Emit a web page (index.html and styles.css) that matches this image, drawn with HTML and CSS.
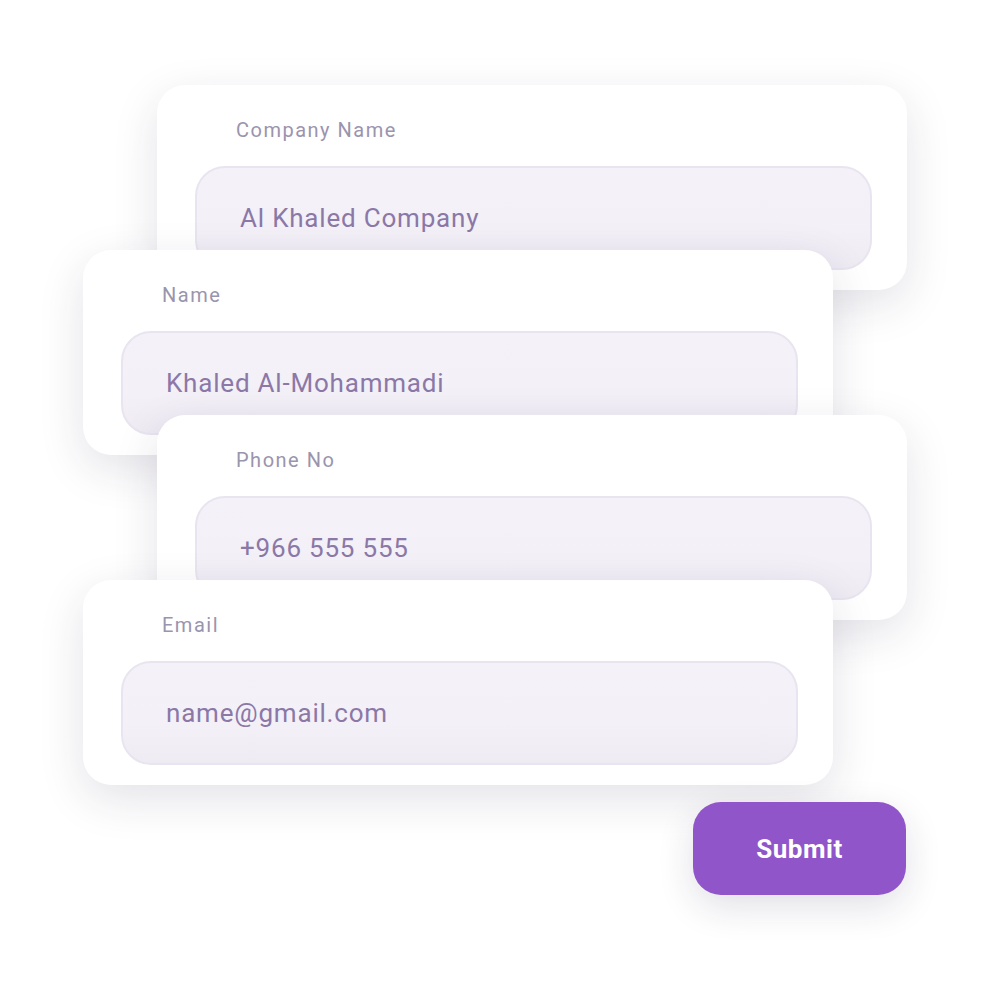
FILE: index.html
```html
<!DOCTYPE html>
<html>
<head>
<meta charset="utf-8">
<link rel="stylesheet" href="styles.css">
</head>
<body>
<div class="stack">
  <div class="card card-right">
    <div class="label">Company Name</div>
    <div class="field">Al Khaled Company</div>
  </div>
  <div class="card card-left">
    <div class="label">Name</div>
    <div class="field">Khaled Al-Mohammadi</div>
  </div>
  <div class="card card-right">
    <div class="label">Phone No</div>
    <div class="field">+966 555 555</div>
  </div>
  <div class="card card-left">
    <div class="label">Email</div>
    <div class="field">name@gmail.com</div>
  </div>
  <button class="submit">Submit</button>
</div>
</body>
</html>
```
FILE: styles.css
```css
html, body {
  margin: 0;
  padding: 0;
  background: #ffffff;
}
body {
  width: 990px;
  height: 990px;
  overflow: hidden;
  font-family: Roboto, "Noto Sans", sans-serif;
}
.stack {
  display: flex;
  flex-direction: column;
  align-items: flex-start;
  padding-top: 85px;
  padding-left: 83px;
}
.card {
  box-sizing: border-box;
  width: 750px;
  height: 205px;
  background: #ffffff;
  border-radius: 28px;
  padding: 33px 34px 0 38px;
  box-shadow: 0 14px 45px rgba(40, 30, 70, 0.13);
  display: flex;
  flex-direction: column;
}
.card + .card {
  margin-top: -40px;
}
.card-right {
  margin-left: 74px;
}
.card-left {
  margin-left: 0;
}
.label {
  font-size: 20px;
  line-height: 24px;
  height: 24px;
  letter-spacing: 1.5px;
  color: #9a94ad;
  padding-left: 41px;
  margin-bottom: 24px;
}
.field {
  box-sizing: border-box;
  height: 104px;
  width: 677px;
  border: 2px solid #e9e5f0;
  border-radius: 30px;
  background: linear-gradient(180deg, #f4f1f9 0%, #f3f0f8 60%, #eeebf3 100%);
  display: flex;
  align-items: center;
  padding-left: 43px;
  font-size: 26px;
  letter-spacing: 0.8px;
  color: #8b78a6;
}
.submit {
  margin-top: 17px;
  margin-left: 610px;
  width: 213px;
  height: 93px;
  border: none;
  border-radius: 28px;
  background: #8f55c9;
  color: #ffffff;
  font-family: Roboto, "Noto Sans", sans-serif;
  font-weight: 700;
  font-size: 26px;
  letter-spacing: 0.5px;
  box-shadow: 0 12px 36px rgba(40, 30, 70, 0.14);
}
```
